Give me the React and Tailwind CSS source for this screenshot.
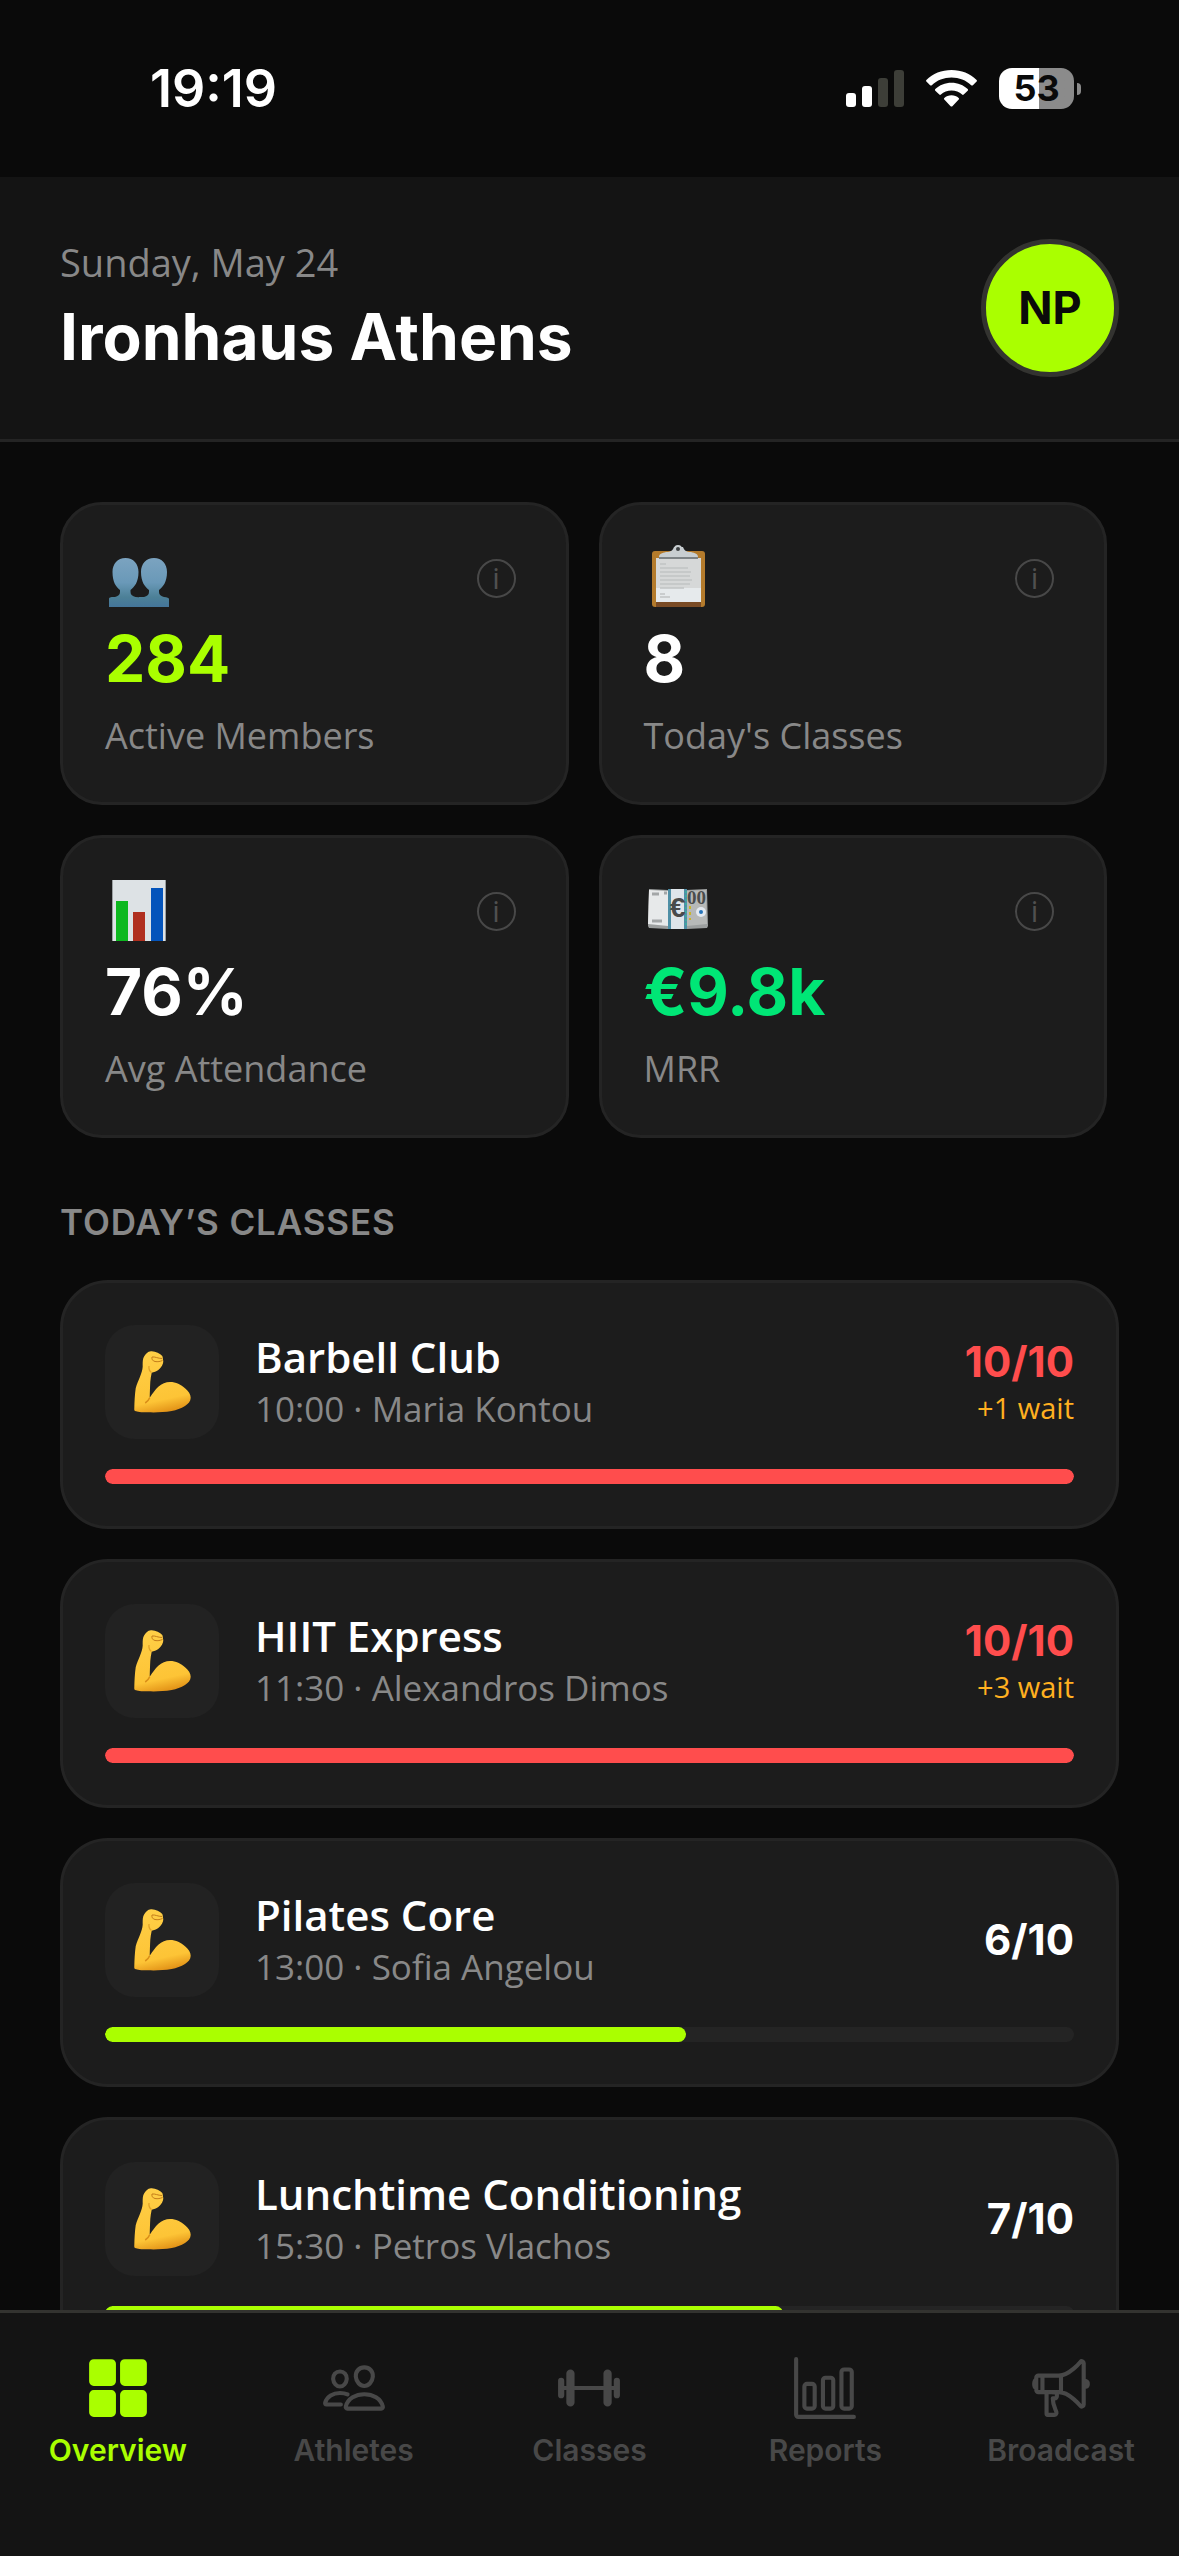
import React from "react";
import {
  IoBarbellOutline,
  IoBarChartOutline,
  IoGrid,
  IoMegaphoneOutline,
  IoPeopleOutline,
} from "react-icons/io5";

const stats = [
  { id: "members", icon: MembersIcon, value: "284", label: "Active Members", color: "text-[#aaff00]" },
  { id: "classes", icon: ClipboardIcon, value: "8", label: "Today's Classes", color: "text-white" },
  { id: "attendance", icon: ChartIcon, value: "76%", label: "Avg Attendance", color: "text-white" },
  { id: "mrr", icon: MoneyIcon, value: "€9.8k", label: "MRR", color: "text-[#00e676]" },
];

const classes = [
  { id: 1, name: "Barbell Club", time: "10:00", coach: "Maria Kontou", booked: 10, capacity: 10, waiting: 1 },
  { id: 2, name: "HIIT Express", time: "11:30", coach: "Alexandros Dimos", booked: 10, capacity: 10, waiting: 3 },
  { id: 3, name: "Pilates Core", time: "13:00", coach: "Sofia Angelou", booked: 6, capacity: 10, waiting: 0 },
  { id: 4, name: "Lunchtime Conditioning", time: "15:30", coach: "Petros Vlachos", booked: 7, capacity: 10, waiting: 0 },
];

const tabs = [
  { id: "overview", label: "Overview", icon: IoGrid, active: true },
  { id: "athletes", label: "Athletes", icon: IoPeopleOutline },
  { id: "classes", label: "Classes", icon: IoBarbellOutline },
  { id: "reports", label: "Reports", icon: IoBarChartOutline },
  { id: "broadcast", label: "Broadcast", icon: IoMegaphoneOutline },
];

function MembersIcon() {
  return (
    <svg viewBox="0 0 66 66" className="w-[66px] h-[66px]" aria-hidden="true">
      <defs>
        <linearGradient id="bust" gradientUnits="userSpaceOnUse" x1="0" y1="13" x2="0" y2="62">
          <stop offset="0" stopColor="#7ba3c0" />
          <stop offset="0.5" stopColor="#6a99b8" />
          <stop offset="0.8" stopColor="#4c8097" />
          <stop offset="1" stopColor="#44759a" />
        </linearGradient>
      </defs>
      <path
        d="M49 13c8 0 13 6 13 14 0 10-4 15-8 18v2c0 3 2 4 5 5 3 0 5 1 5 2v8H34V52l5 0c3-1 5-2 5-5v-2c-4-3-8-8-8-18 0-8 5-14 13-14Z"
        fill="url(#bust)"
      />
      <path
        d="M20.500 13c8 0 13 6 13 14 0 10-4 15-8 18v2c0 3 2 4 5 5 4 0 8 1 10 3v7H4V54c0-2 3-2 6-2 3-1 5-2 5-5v-2c-4-3-7.500-8-7.500-18 0-8 5-14 13-14Z"
        fill="url(#bust)"
      />
    </svg>
  );
}

function ClipboardIcon() {
  return (
    <svg viewBox="0 0 66 66" className="w-[66px] h-[66px]" aria-hidden="true">
      <rect x="8" y="6" width="53" height="56" rx="3" fill="#b47b2c" />
      <path d="M12 57h45v5H12Z" fill="#7a4b25" />
      <path d="M12 13h45v30H12Z" fill="#d6d8d8" />
      <path d="M12 43h45v14H12Z" fill="#e6eaec" />
      <path
        d="M16 19h6M16 23h28M16 27h31M16 31h30M16 35h32M16 39h30M16 43h24M16 49h5M16 52h10"
        stroke="#c1c3c3"
        strokeWidth="1.500"
      />
      <path d="M15 12c0-3 3-4 7-5 5 0 7-2 8-5h9c1 3 3 5 8 5 4 1 7 2 7 5l-2 2H17Z" fill="#c8ced1" />
      <path d="M15 12h39v2H15Z" fill="#7d8386" />
      <circle cx="34" cy="4" r="4" fill="#c8ced1" />
      <circle cx="34" cy="4" r="2" fill="#3b3f41" />
    </svg>
  );
}

function ChartIcon() {
  return (
    <svg viewBox="0 0 66 66" className="w-[66px] h-[66px]" aria-hidden="true">
      <path d="M7 2h54v61H7Z" fill="#dde2e5" />
      <path d="M7 2h1v61H7ZM60 2h1v61h-1Z" fill="#9ba0a2" />
      <path d="M11 23h12v40H11Z" fill="#0db81f" />
      <path d="M28 34h12v29H28Z" fill="#b02f1f" />
      <path d="M46 10h12v53H46Z" fill="#0454bb" />
    </svg>
  );
}

function MoneyIcon() {
  return (
    <svg viewBox="0 0 66 66" className="w-[66px] h-[66px]" aria-hidden="true">
      <path d="m5 11 19 1h18l21-1 1 37-1 2-20 1H24L5 50l-1-2Z" fill="#9c9f9f" />
      <path d="m5 12 19 1v35L4 46Z" fill="#e7e9ea" />
      <path d="m43 13 19-1 1 34-20 2Z" fill="#b7b9b8" />
      <path d="M8 16h7M8 43h10M20 15h3" stroke="#a3a6a7" strokeWidth="3" />
      <path d="M24 11h19v40H24Z" fill="#dfe5ea" />
      <path d="M24 11h3v40h-3ZM40 11h3v40h-3Z" fill="#4f8fa6" />
      <text x="26" y="39" fontSize="28" fontWeight="700" fontFamily="Liberation Sans, sans-serif" fill="#4a4b4b">
        €
      </text>
      <text x="43" y="26" fontSize="19" fontWeight="700" fontFamily="Liberation Serif, serif" fill="#4a4c4c">
        00
      </text>
      <circle cx="57" cy="34" r="5" fill="#e3e9f0" />
      <circle cx="57" cy="34" r="2" fill="#2674b9" />
      <path d="M46 28v14" stroke="#c9b52b" strokeWidth="2" strokeDasharray="3 3" />
      <path d="M42 13v36" stroke="#2cc49a" strokeWidth="1" strokeDasharray="2 2" />
    </svg>
  );
}

function BicepIcon() {
  return (
    <svg viewBox="0 0 60 62" className="w-[60px] h-[62px]" aria-hidden="true">
      <defs>
        <linearGradient id="arm" x1="0.3" y1="0" x2="0.5" y2="1">
          <stop offset="0" stopColor="#ffcf47" />
          <stop offset="0.8" stopColor="#fdc436" />
          <stop offset="1" stopColor="#e39418" />
        </linearGradient>
      </defs>
      <path
        d="M14.700 2.300C16 .8 18 0 19.700.3c4 .5 8.500 2 10.600 4.700.8 1.500.3 3 1 5 .2 3-2 6.500-5 9-2 1.500-4.500 2-6.600 2.700-.8 3-1 6-1.400 9-.3 5-.4 11-.6 16 3-4.500 5.500-8 8.600-11 3.500-3 7.500-4.700 11.700-4.700 6 0 11 2.500 15 6.300 3.500 3 5.700 6 5.700 9.400 0 3.300-2.500 6.300-5.700 8.300-4 2.500-8.500 4-13.300 5-8 1.300-16 1.600-23.700 1.300-4.500 0-9 0-13-1.300-.8-.5-.8-1.500-.7-2.700.2-7 .5-14 1.400-20 1-4.300 3-8 4.300-11.600 1.300-3.500 2.500-6.500 2.700-10 0-3-.2-5.500.6-8.400.8-2 2-3.700 3.400-5Z"
        fill="url(#arm)"
      />
      <path d="M20 6c3-.5 6 1.500 10 1.500M20 6c-.5 2 .5 4 3 4.500 3 .5 5 0 7.500-1" stroke="#c47d1a" strokeWidth="1" fill="none" />
      <path d="M17 15c-.5 3 .5 5 2.500 6.500" stroke="#e0a024" strokeWidth="1.200" fill="none" />
      <path d="M17.700 46.700c-1 2.500-2.500 4-4.500 5.300" stroke="#d98d18" strokeWidth="1.500" fill="none" />
    </svg>
  );
}

function StatusBar() {
  return (
    <div className="h-[177px] shrink-0 flex items-center justify-between pl-[150px] pr-[98px] font-['Inter',sans-serif] text-white">
      <span className="text-[52px] leading-[60px] font-semibold">19:19</span>
      <div className="flex items-center gap-[22px]">
        <svg viewBox="0 0 58 37" className="w-[58px] h-[37px]" aria-hidden="true">
          <rect x="0" y="23" width="10" height="14" rx="3" fill="#fff" />
          <rect x="16" y="16" width="10" height="21" rx="3" fill="#fff" />
          <rect x="32" y="8" width="10" height="29" rx="3" fill="#3d3e38" />
          <rect x="48" y="0" width="10" height="37" rx="3" fill="#3d3e38" />
        </svg>
        <svg viewBox="0 0 51 37" className="w-[51px] h-[37px]" fill="#fff" aria-hidden="true">
          <path d="M25.500 0C15.700 0 6.700 3.700.4 9.900c-.5.500-.5 1.200 0 1.700l3.700 3.600c.5.500 1.200.5 1.700 0C10.900 10.300 17.900 7.500 25.500 7.500s14.600 2.800 19.700 7.700c.5.500 1.200.5 1.700 0l3.700-3.600c.5-.5.500-1.200 0-1.700C44.300 3.700 35.300 0 25.500 0Z" />
          <path d="M25.500 12.700c-6.300 0-12 2.400-16.200 6.300-.5.500-.5 1.200 0 1.700l4 3.900c.5.400 1.100.4 1.600 0 2.800-2.500 6.500-4 10.600-4s7.800 1.500 10.600 4c.5.400 1.100.4 1.600 0l4-3.900c.5-.5.500-1.200 0-1.700-4.200-3.900-9.900-6.300-16.200-6.300Z" />
          <path d="M25.500 25.200c-2.800 0-5.300 1-7.200 2.700-.5.500-.5 1.200 0 1.700l6.300 6.600c.5.500 1.300.5 1.800 0l6.300-6.600c.5-.5.5-1.200 0-1.700-1.900-1.700-4.400-2.700-7.200-2.700Z" />
        </svg>
        <div className="flex items-center gap-[3px]">
          <div className="w-[75px] h-[41px] rounded-[13px] bg-linear-to-r from-white from-53% to-[#8b8b8b] to-53% flex items-center justify-center text-[36px] leading-[41px] font-bold text-[#0a0a0a]">
            53
          </div>
          <div className="w-1 h-3 rounded-r-full bg-[#8b8b8b]" />
        </div>
      </div>
    </div>
  );
}

function StatCard({ stat }) {
  const Icon = stat.icon;
  return (
    <div className="min-w-0 rounded-[42px] border-3 border-[#242424] bg-[#1c1c1c] px-[42px] pt-10 pb-[45px]">
      <div className="flex items-center justify-between">
        <Icon />
        <button
          type="button"
          aria-label={`About ${stat.label}`}
          className="w-[39px] h-[39px] mr-2 rounded-full border-2 border-[#484848] flex items-center justify-center text-[30px] leading-[30px] text-[#505050]"
        >
          i
        </button>
      </div>
      <p className={`mt-3 text-[64px] leading-[72px] font-bold font-['Inter',sans-serif] ${stat.color}`}>
        {stat.value}
      </p>
      <p className="mt-5 text-[36px] leading-[42px] text-[#888]">{stat.label}</p>
    </div>
  );
}

function ClassCard({ item }) {
  const full = item.booked >= item.capacity;
  return (
    <li className="rounded-[48px] border-3 border-[#242424] bg-[#1c1c1c] p-[42px]">
      <div className="flex items-center">
        <div className="w-[114px] h-[114px] shrink-0 rounded-[30px] bg-[#222] flex items-center justify-center">
          <BicepIcon />
        </div>
        <div className="ml-9 min-w-0 flex-1">
          <h3 className="text-[42px] leading-[54px] font-semibold text-white">{item.name}</h3>
          <p className="text-[35px] leading-[50px] text-[#888]">
            {item.time} · {item.coach}
          </p>
        </div>
        <div className="text-right shrink-0">
          <p
            className={`text-[42px] leading-[52px] font-bold font-['Inter',sans-serif] ${full ? "text-[#ff4d4d]" : "text-white"}`}
          >
            {item.booked}/{item.capacity}
          </p>
          {item.waiting > 0 && (
            <p className="text-[29px] leading-[40px] text-[#ffb020]">+{item.waiting} wait</p>
          )}
        </div>
      </div>
      <div className="mt-[30px] h-[15px] rounded-full bg-[#242424] overflow-hidden">
        <div
          className={`h-full rounded-full ${full ? "bg-[#ff4d4d]" : "bg-[#aaff00]"}`}
          style={{ width: `${(item.booked / item.capacity) * 100}%` }}
        />
      </div>
    </li>
  );
}

export default function App() {
  return (
    <div className="h-screen flex flex-col overflow-hidden bg-[#0a0a0a] font-['Open_Sans',sans-serif]">
      <StatusBar />

      <header className="shrink-0 bg-[#141414] border-b-3 border-[#242424] px-[60px] pt-[60px] pb-[60px] flex items-center justify-between">
        <div>
          <p className="text-[38px] leading-[50px] text-[#888]">Sunday, May 24</p>
          <h1 className="mt-2 text-[64px] leading-[84px] font-bold text-white font-['Inter',sans-serif]">
            Ironhaus Athens
          </h1>
        </div>
        <button
          type="button"
          className="w-[138px] h-[138px] shrink-0 rounded-full border-5 border-[#333330] bg-[#aaff00] text-[45px] font-bold text-[#0a0a0a] font-['Inter',sans-serif]"
        >
          NP
        </button>
      </header>

      <main className="flex-1 min-h-0 overflow-hidden px-[60px] pt-[60px]">
        <section className="grid grid-cols-2 gap-[30px] pr-3">
          {stats.map((stat) => (
            <StatCard key={stat.id} stat={stat} />
          ))}
        </section>

        <h2 className="mt-[60px] text-[35px] leading-[48px] font-semibold tracking-wide text-[#888] font-['Inter',sans-serif]">
          TODAY’S CLASSES
        </h2>
        <ul className="mt-[34px] flex flex-col gap-[30px]">
          {classes.map((item) => (
            <ClassCard key={item.id} item={item} />
          ))}
        </ul>
      </main>

      <nav className="shrink-0 h-[246px] bg-[#141414] border-t-3 border-[#333330] grid grid-cols-5 items-start pt-[42px]">
        {tabs.map((tab) => {
          const Icon = tab.icon;
          return (
            <a
              key={tab.id}
              href={`#${tab.id}`}
              className={`flex flex-col items-center gap-2 ${tab.active ? "text-[#aaff00]" : "text-[#484848]"}`}
            >
              <Icon className="w-[66px] h-[66px]" />
              <span className="text-[30px] leading-[42px] font-semibold font-['Inter',sans-serif]">{tab.label}</span>
            </a>
          );
        })}
      </nav>
    </div>
  );
}
